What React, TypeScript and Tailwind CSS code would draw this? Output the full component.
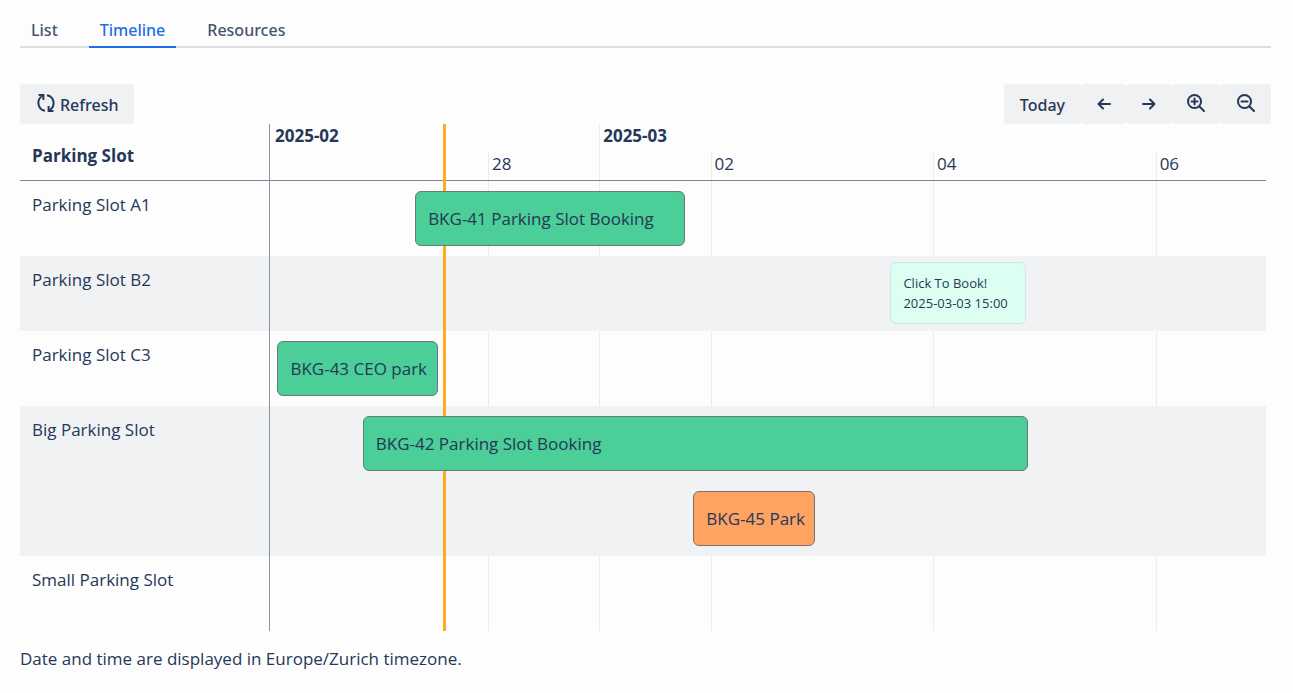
import React, { useState } from 'react';

interface Booking {
  id: string;
  title: string;
  from: number;
  to: number;
  lane?: number;
  color: string;
}

interface Slot {
  name: string;
  lanes: number;
  bookings: Booking[];
}

// All times are hours counted from 2025-02-26 00:00
const VIEW_START = 1;
const VIEW_HOURS = 214.8;
const NOW = 38.3;

const GREEN = 'bg-[#4bce97] border-[#6b7a78]';
const ORANGE = 'bg-[#fea362] border-[#7d6f6a]';

const slots: Slot[] = [
  { name: 'Parking Slot A1', lanes: 1, bookings: [{ id: 'BKG-41', title: 'Parking Slot Booking', from: 32.3, to: 90.6, color: GREEN }] },
  { name: 'Parking Slot B2', lanes: 1, bookings: [] },
  { name: 'Parking Slot C3', lanes: 1, bookings: [{ id: 'BKG-43', title: 'CEO park', from: 2.6, to: 37.2, color: GREEN }] },
  {
    name: 'Big Parking Slot',
    lanes: 2,
    bookings: [
      { id: 'BKG-42', title: 'Parking Slot Booking', from: 21, to: 164.5, color: GREEN },
      { id: 'BKG-45', title: 'Park', from: 92.3, to: 118.6, lane: 1, color: ORANGE },
    ],
  },
  { name: 'Small Parking Slot', lanes: 1, bookings: [] },
];

const days = [
  { label: '28', at: 48 },
  { label: '02', at: 96 },
  { label: '04', at: 144 },
  { label: '06', at: 192 },
];

const left = (hour: number) => `${((hour - VIEW_START) / VIEW_HOURS) * 100}%`;
const width = (from: number, to: number) => `${((to - from) / VIEW_HOURS) * 100}%`;

const strokeProps = {
  fill: 'none',
  stroke: 'currentColor',
  strokeWidth: 2,
  strokeLinecap: 'round' as const,
  strokeLinejoin: 'round' as const,
};

const RefreshIcon = () => (
  <svg width="20" height="20" viewBox="0 0 20 20" {...strokeProps} strokeLinecap="butt" strokeLinejoin="miter" aria-hidden="true">
    <path d="M9 17.8A8 8 0 0 1 6.4 3" />
    <path d="M2.6 1.9H7.4V7" />
    <path d="M11 2.2A8 8 0 0 1 13.6 17" />
    <path d="M17.4 18.1H12.6V13" />
  </svg>
);

const ArrowIcon = ({ flip }: { flip?: boolean }) => (
  <svg width="14" height="12" viewBox="0 0 14 12" {...strokeProps} className={flip ? 'rotate-180' : ''} aria-hidden="true">
    <path d="M13 6H1.5M6 1.5L1.5 6L6 10.5" />
  </svg>
);

const ZoomIcon = ({ plus }: { plus?: boolean }) => (
  <svg width="18" height="18" viewBox="0 0 18 18" {...strokeProps} aria-hidden="true">
    <circle cx="7.5" cy="7.5" r="6.5" />
    <path d="M12.5 12.5L17 17" />
    <path d="M4.5 7.5H10.5" />
    {plus && <path d="M7.5 4.5V10.5" />}
  </svg>
);

const Tabs = () => {
  const [active, setActive] = useState('Timeline');

  return (
    <nav role="tablist" className="flex gap-5 border-b-2 border-[#dddee1] font-['Noto_Sans',sans-serif] text-base text-[#44546f]">
      {['List', 'Timeline', 'Resources'].map(tab => (
        <button
          key={tab}
          role="tab"
          aria-selected={tab === active}
          onClick={() => setActive(tab)}
          className={`-mb-0.5 h-9 border-b-2 px-[11px] pt-0.5 font-medium ${
            tab === active ? 'border-[#1d6fe8] text-[#1d6fe8]' : 'border-transparent'
          }`}
        >
          {tab}
        </button>
      ))}
    </nav>
  );
};

const toolButton = 'flex h-10 items-center justify-center rounded bg-[#f0f1f3] font-medium hover:bg-[#e3e5e9]';

const Toolbar = () => (
  <div className="mt-9 flex justify-between font-['Noto_Sans',sans-serif] text-base">
    <button className={`${toolButton} gap-1 px-4`}>
      <span className="pb-0.5"><RefreshIcon /></span>
      <span className="pt-0.5">Refresh</span>
    </button>
    <div className="flex">
      <button className={`${toolButton} px-4 pt-0.5`}>Today</button>
      <button aria-label="Previous" className={`${toolButton} w-[45px]`}><ArrowIcon /></button>
      <button aria-label="Next" className={`${toolButton} w-[45px]`}><ArrowIcon flip /></button>
      <button aria-label="Zoom in" className={`${toolButton} w-[50px] pb-0.5`}><ZoomIcon plus /></button>
      <button aria-label="Zoom out" className={`${toolButton} w-[50px] pb-0.5`}><ZoomIcon /></button>
    </div>
  </div>
);

const BookingBar = ({ booking }: { booking: Booking }) => (
  <button
    className={`absolute z-10 h-[55px] overflow-hidden rounded-md border px-3 text-left whitespace-nowrap ${booking.lane ? 'top-[85px]' : 'top-[10px]'} ${booking.color}`}
    style={{ left: left(booking.from), width: width(booking.from, booking.to) }}
  >
    {booking.id} {booking.title}
  </button>
);

const Timeline = () => (
  <div className="relative mr-[5px]">
    {/* grid lines, hidden below the striped rows */}
    <div className="absolute inset-y-0 right-0 left-[250px]">
      {days.map(day => (
        <div key={day.label} className="absolute top-7 bottom-0 w-px bg-[#ebecee]" style={{ left: left(day.at) }} />
      ))}
      <div className="absolute inset-y-0 w-px bg-[#ebecee]" style={{ left: left(72) }} />
    </div>

    <table className="relative w-full table-fixed border-separate border-spacing-0">
      <thead>
        <tr className="h-[57px]">
          <th scope="col" className="w-[250px] border-b border-[#7a869a] px-3 pt-2 text-left font-bold">
            Parking Slot
          </th>
          <th scope="col" className="relative border-b border-[#7a869a] p-0">
            <span className="absolute top-0 left-[5px] font-bold">2025-02</span>
            <span className="absolute top-0 pl-1 font-bold" style={{ left: left(72) }}>2025-03</span>
            {days.map(day => (
              <span key={day.label} className="absolute top-7 pl-1 font-normal" style={{ left: left(day.at) }}>
                {day.label}
              </span>
            ))}
          </th>
        </tr>
      </thead>
      <tbody>
        {slots.map(slot => (
          <tr key={slot.name} className={`even:bg-[#f1f2f4] ${slot.lanes === 2 ? 'h-[150px]' : 'h-[75px]'}`}>
            <th scope="row" className="px-3 pt-3 text-left align-top font-normal">{slot.name}</th>
            <td className="relative p-0">
              {slot.bookings.map(booking => <BookingBar key={booking.id} booking={booking} />)}
              {slot.name === 'Parking Slot B2' && (
                <button
                  className="absolute top-[6px] z-10 h-[62px] rounded-md border border-[#cce6f0] bg-[#dcfff1] px-3 text-left text-[13px] leading-5 whitespace-nowrap"
                  style={{ left: left(134.8), width: width(134.8, 164.1) }}
                >
                  Click To Book!<br />2025-03-03 15:00
                </button>
              )}
            </td>
          </tr>
        ))}
      </tbody>
    </table>

    <div className="absolute inset-y-0 right-0 left-[249px] border-l border-[#8993a0] pointer-events-none">
      <div className="absolute inset-y-0 w-[3px] bg-[#ffab1f]" style={{ left: left(NOW) }} />
    </div>
  </div>
);

const App: React.FC = () => (
  <main className="min-h-screen bg-[#fdfdfd] px-5 pt-3 pr-[22px] font-['Open_Sans','Noto_Sans',sans-serif] text-[17px] leading-6 text-[#253858]">
    <Tabs />
    <Toolbar />
    <Timeline />
    <p className="mt-4">Date and time are displayed in Europe/Zurich timezone.</p>
  </main>
);

export default App;
